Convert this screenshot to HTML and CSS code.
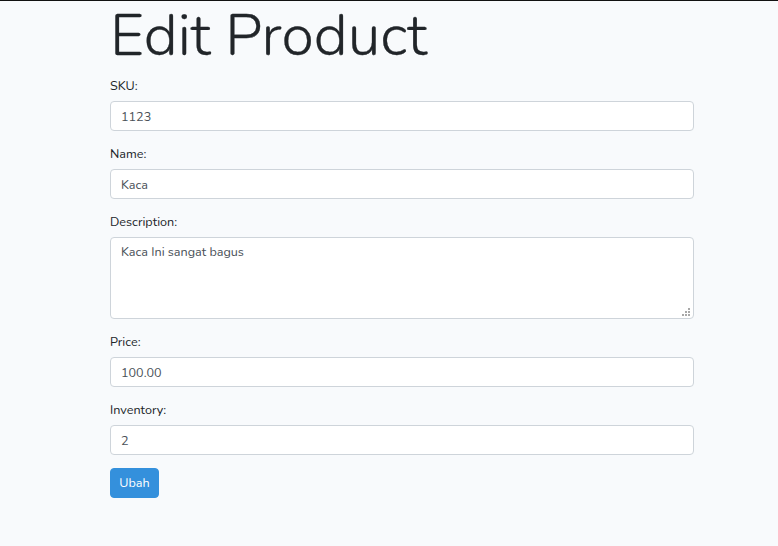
FILE: index.html
```html
<!DOCTYPE html>
<html lang="id">
<head>
<meta charset="utf-8">
<title>Edit Product</title>
<link rel="stylesheet" href="styles.css">
</head>
<body>
<div class="topline"></div>
<main class="container">
  <h1 class="title">Edit Product</h1>
  <form class="form">
    <div class="form-group">
      <label class="label" for="sku">SKU:</label>
      <input class="control" id="sku" type="text" value="1123">
    </div>
    <div class="form-group">
      <label class="label" for="name">Name:</label>
      <input class="control" id="name" type="text" value="Kaca">
    </div>
    <div class="form-group">
      <label class="label" for="desc">Description:</label>
      <div class="textarea-wrap">
        <textarea class="control textarea" id="desc">Kaca Ini sangat bagus</textarea>
        <svg class="grip" width="8" height="8" viewBox="0 0 8 8" aria-hidden="true">
          <rect x="6" y="0" width="2" height="2"/>
          <rect x="3" y="3" width="2" height="2"/>
          <rect x="6" y="3" width="2" height="2"/>
          <rect x="0" y="6" width="2" height="2"/>
          <rect x="3" y="6" width="2" height="2"/>
          <rect x="6" y="6" width="2" height="2"/>
        </svg>
      </div>
    </div>
    <div class="form-group">
      <label class="label" for="price">Price:</label>
      <input class="control" id="price" type="text" value="100.00">
    </div>
    <div class="form-group">
      <label class="label" for="inv">Inventory:</label>
      <input class="control" id="inv" type="text" value="2">
    </div>
    <button class="btn" type="button">Ubah</button>
  </form>
</main>
</body>
</html>
```

FILE: styles.css
```css
html, body {
  margin: 0;
  padding: 0;
}
body {
  background: #f8fafc;
  font-family: "Nunito", "Lato", "Noto Sans", sans-serif;
  color: #212529;
  font-size: 12.6px;
  height: 546px;
  overflow: hidden;
}
.topline {
  height: 1px;
  background: #111;
}
.container {
  margin-left: 110px;
  width: 584px;
}
.title {
  font-weight: 300;
  font-size: 59px;
  line-height: 71px;
  margin: -1px 0 5px 0;
  letter-spacing: 0;
  -webkit-text-stroke: 0.3px #212529;
}
.form-group {
  margin-bottom: 13px;
}
.label {
  display: block;
  line-height: 20px;
  margin-bottom: 5px;
}
.control {
  display: block;
  box-sizing: border-box;
  width: 100%;
  height: 30px;
  padding: 0 10px;
  border: 1px solid #ced4da;
  border-radius: 4px;
  background: #fff;
  color: #495057;
  font-family: inherit;
  font-size: 12.6px;
  margin: 0;
}
.textarea-wrap {
  position: relative;
}
.textarea {
  height: 82px;
  padding: 4px 10px;
  line-height: 20px;
  resize: none;
}
.grip {
  position: absolute;
  right: 4px;
  bottom: 3px;
  fill: #a8a8a8;
}
.btn {
  display: block;
  height: 30px;
  width: 49px;
  padding: 0 0 2px 0;
  border: 1px solid #3490dc;
  border-radius: 4px;
  background: #3490dc;
  color: #fff;
  font-family: inherit;
  font-size: 12.6px;
}
```
